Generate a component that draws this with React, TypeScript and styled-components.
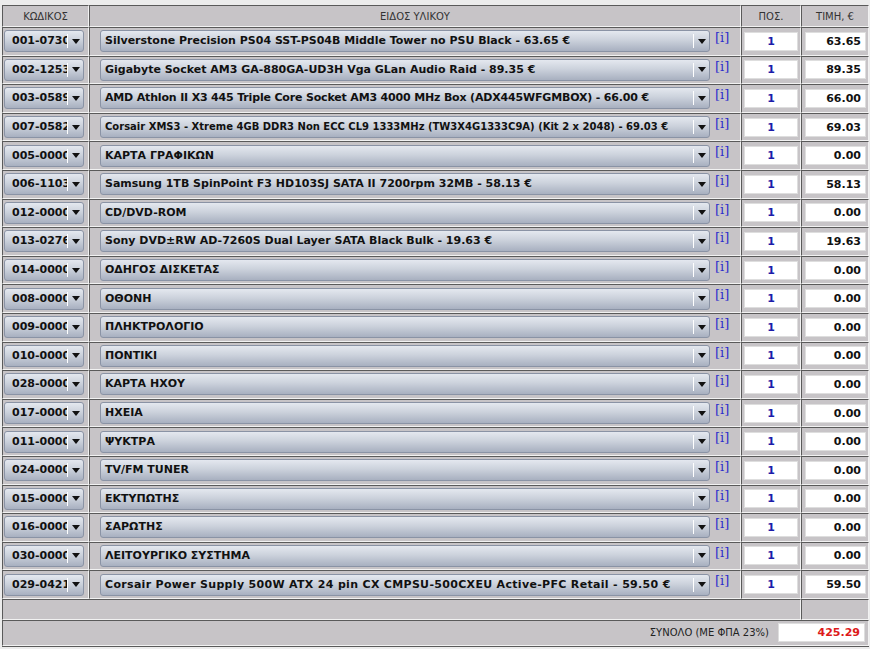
import { Fragment } from "react"
import styled, { createGlobalStyle } from "styled-components"

const GlobalStyle = createGlobalStyle`
  html, body {
    margin: 0;
    padding: 0;
    background: #ececec;
  }
  body {
    font-family: "DejaVu Sans", "Noto Sans", sans-serif;
  }
`

// page wrapper: a thin light strip round the sheet
const Page = styled.div`
  width: 870px;
  padding: 5px 1px 0 2px;
  box-sizing: border-box;
`

const Sheet = styled.div`
  display: grid;
  grid-template-columns: 87px 652px 60px 68px;
  grid-template-rows: 22px repeat(20, 28.6px) 21px 26px;
  background: #c7c4c7;
  border-right: 1px solid #5a5a5a;
  border-bottom: 1px solid #5a5a5a;
`

const Cell = styled.div<{ $span?: number; $justify?: string }>`
  box-sizing: border-box;
  display: flex;
  align-items: center;
  justify-content: ${(p) => p.$justify ?? "flex-start"};
  grid-column: ${(p) => (p.$span ? `span ${p.$span}` : "auto")};
  border-top: 1px solid #5a5a5a;
  border-left: 1px solid #5a5a5a;
  border-right: 1px solid #f2f2f2;
  border-bottom: 1px solid #f2f2f2;
  overflow: hidden;
`

const HeadCell = styled(Cell)`
  justify-content: center;
  font-size: 10px;
  color: #333;
`

const Combo = styled.div<{ $w: number; $ml: number }>`
  display: flex;
  align-items: stretch;
  width: ${(p) => p.$w}px;
  height: 22px;
  margin-left: ${(p) => p.$ml}px;
  box-sizing: border-box;
  border: 1px solid #8a93a5;
  border-radius: 3px;
  background: linear-gradient(#e4e8ef 0%, #ccd2dc 45%, #a8b0c0 100%);
  overflow: hidden;
`

const ComboText = styled.div<{ $size?: number; $ls?: number; $pl: number }>`
  flex: 1;
  min-width: 0;
  overflow: hidden;
  white-space: nowrap;
  padding-left: ${(p) => p.$pl}px;
  font-size: ${(p) => p.$size ?? 11}px;
  letter-spacing: ${(p) => p.$ls ?? 0}px;
  font-weight: bold;
  line-height: 20px;
  color: #111;
`

const ComboArrow = styled.div`
  position: relative;
  width: 16px;
  flex: none;
  display: flex;
  align-items: center;
  justify-content: center;

  &::before {
    content: "";
    position: absolute;
    left: 0;
    top: 3px;
    bottom: 3px;
    width: 1px;
    background: #ffffff;
  }

  &::after {
    content: "";
    border-left: 4.5px solid transparent;
    border-right: 4.5px solid transparent;
    border-top: 5px solid #111;
    margin-left: 1px;
  }
`

const Info = styled.span`
  align-self: flex-start;
  margin: 3px 0 0 5px;
  font-family: "DejaVu Serif", serif;
  font-size: 13px;
  line-height: 14px;
  color: #2e2ecc;
`

const Field = styled.div<{ $w: number; $ml?: number; $align: string; $color: string }>`
  width: ${(p) => p.$w}px;
  height: 19px;
  margin-left: ${(p) => p.$ml ?? 0}px;
  box-sizing: border-box;
  background: #fff;
  border: 1px solid #dedede;
  padding: 0 4px;
  text-align: ${(p) => p.$align};
  font-size: 11px;
  font-weight: bold;
  line-height: 17px;
  color: ${(p) => p.$color};
`

const TotalField = styled(Field)`
  margin-right: 3px;
`

const TotalLabel = styled.span`
  font-size: 10px;
  color: #222;
  margin-right: 9px;
`

type Row = { code: string; name: string; price: string; size?: number; ls?: number }

const rows: Row[] = [
  { code: "001-0730", name: "Silverstone Precision PS04 SST-PS04B Middle Tower no PSU Black - 63.65 €", price: "63.65" },
  { code: "002-1253", name: "Gigabyte Socket AM3 GA-880GA-UD3H Vga GLan Audio Raid - 89.35 €", price: "89.35" },
  { code: "003-0589", name: "AMD Athlon II X3 445 Triple Core Socket AM3 4000 MHz Box (ADX445WFGMBOX) - 66.00 €", price: "66.00", ls: -0.17 },
  { code: "007-0582", name: "Corsair XMS3 - Xtreme 4GB DDR3 Non ECC CL9 1333MHz (TW3X4G1333C9A) (Kit 2 x 2048) - 69.03 €", price: "69.03", size: 10 },
  { code: "005-0000", name: "ΚΑΡΤΑ ΓΡΑΦΙΚΩΝ", price: "0.00" },
  { code: "006-1103", name: "Samsung 1TB SpinPoint F3 HD103SJ SATA II 7200rpm 32MB - 58.13 €", price: "58.13" },
  { code: "012-0000", name: "CD/DVD-ROM", price: "0.00" },
  { code: "013-0276", name: "Sony DVD±RW AD-7260S Dual Layer SATA Black Bulk - 19.63 €", price: "19.63" },
  { code: "014-0000", name: "ΟΔΗΓΟΣ ΔΙΣΚΕΤΑΣ", price: "0.00" },
  { code: "008-0000", name: "ΟΘΟΝΗ", price: "0.00" },
  { code: "009-0000", name: "ΠΛΗΚΤΡΟΛΟΓΙΟ", price: "0.00" },
  { code: "010-0000", name: "ΠΟΝΤΙΚΙ", price: "0.00" },
  { code: "028-0000", name: "ΚΑΡΤΑ ΗΧΟΥ", price: "0.00" },
  { code: "017-0000", name: "ΗΧΕΙΑ", price: "0.00" },
  { code: "011-0000", name: "ΨΥΚΤΡΑ", price: "0.00" },
  { code: "024-0000", name: "TV/FM TUNER", price: "0.00" },
  { code: "015-0000", name: "ΕΚΤΥΠΩΤΗΣ", price: "0.00" },
  { code: "016-0000", name: "ΣΑΡΩΤΗΣ", price: "0.00" },
  { code: "030-0000", name: "ΛΕΙΤΟΥΡΓΙΚΟ ΣΥΣΤΗΜΑ", price: "0.00" },
  { code: "029-0421", name: "Corsair Power Supply 500W ATX 24 pin CX CMPSU-500CXEU Active-PFC Retail - 59.50 €", price: "59.50", ls: 0.32 },
]

export default function App() {
  return (
    <Page>
      <GlobalStyle />
      <Sheet>
        <HeadCell>ΚΩΔΙΚΟΣ</HeadCell>
        <HeadCell>ΕΙΔΟΣ ΥΛΙΚΟΥ</HeadCell>
        <HeadCell>ΠΟΣ.</HeadCell>
        <HeadCell>ΤΙΜΗ, €</HeadCell>

        {rows.map((r) => (
          <Fragment key={r.code}>
            <Cell>
              <Combo $w={80} $ml={1}>
                <ComboText $pl={7}>{r.code}</ComboText>
                <ComboArrow />
              </Combo>
            </Cell>
            <Cell>
              <Combo $w={610} $ml={10}>
                <ComboText $pl={4} $size={r.size} $ls={r.ls}>{r.name}</ComboText>
                <ComboArrow />
              </Combo>
              <Info>[i]</Info>
            </Cell>
            <Cell>
              <Field $w={54} $ml={2} $align="center" $color="#1c1caa">1</Field>
            </Cell>
            <Cell>
              <Field $w={61} $ml={3} $align="right" $color="#111">{r.price}</Field>
            </Cell>
          </Fragment>
        ))}

        <Cell $span={3} />
        <Cell />

        <Cell $span={4} $justify="flex-end">
          <TotalLabel>ΣΥΝΟΛΟ (ΜΕ ΦΠΑ 23%)</TotalLabel>
          <TotalField $w={87} $align="right" $color="#dd1a1a">425.29</TotalField>
        </Cell>
      </Sheet>
    </Page>
  )
}
